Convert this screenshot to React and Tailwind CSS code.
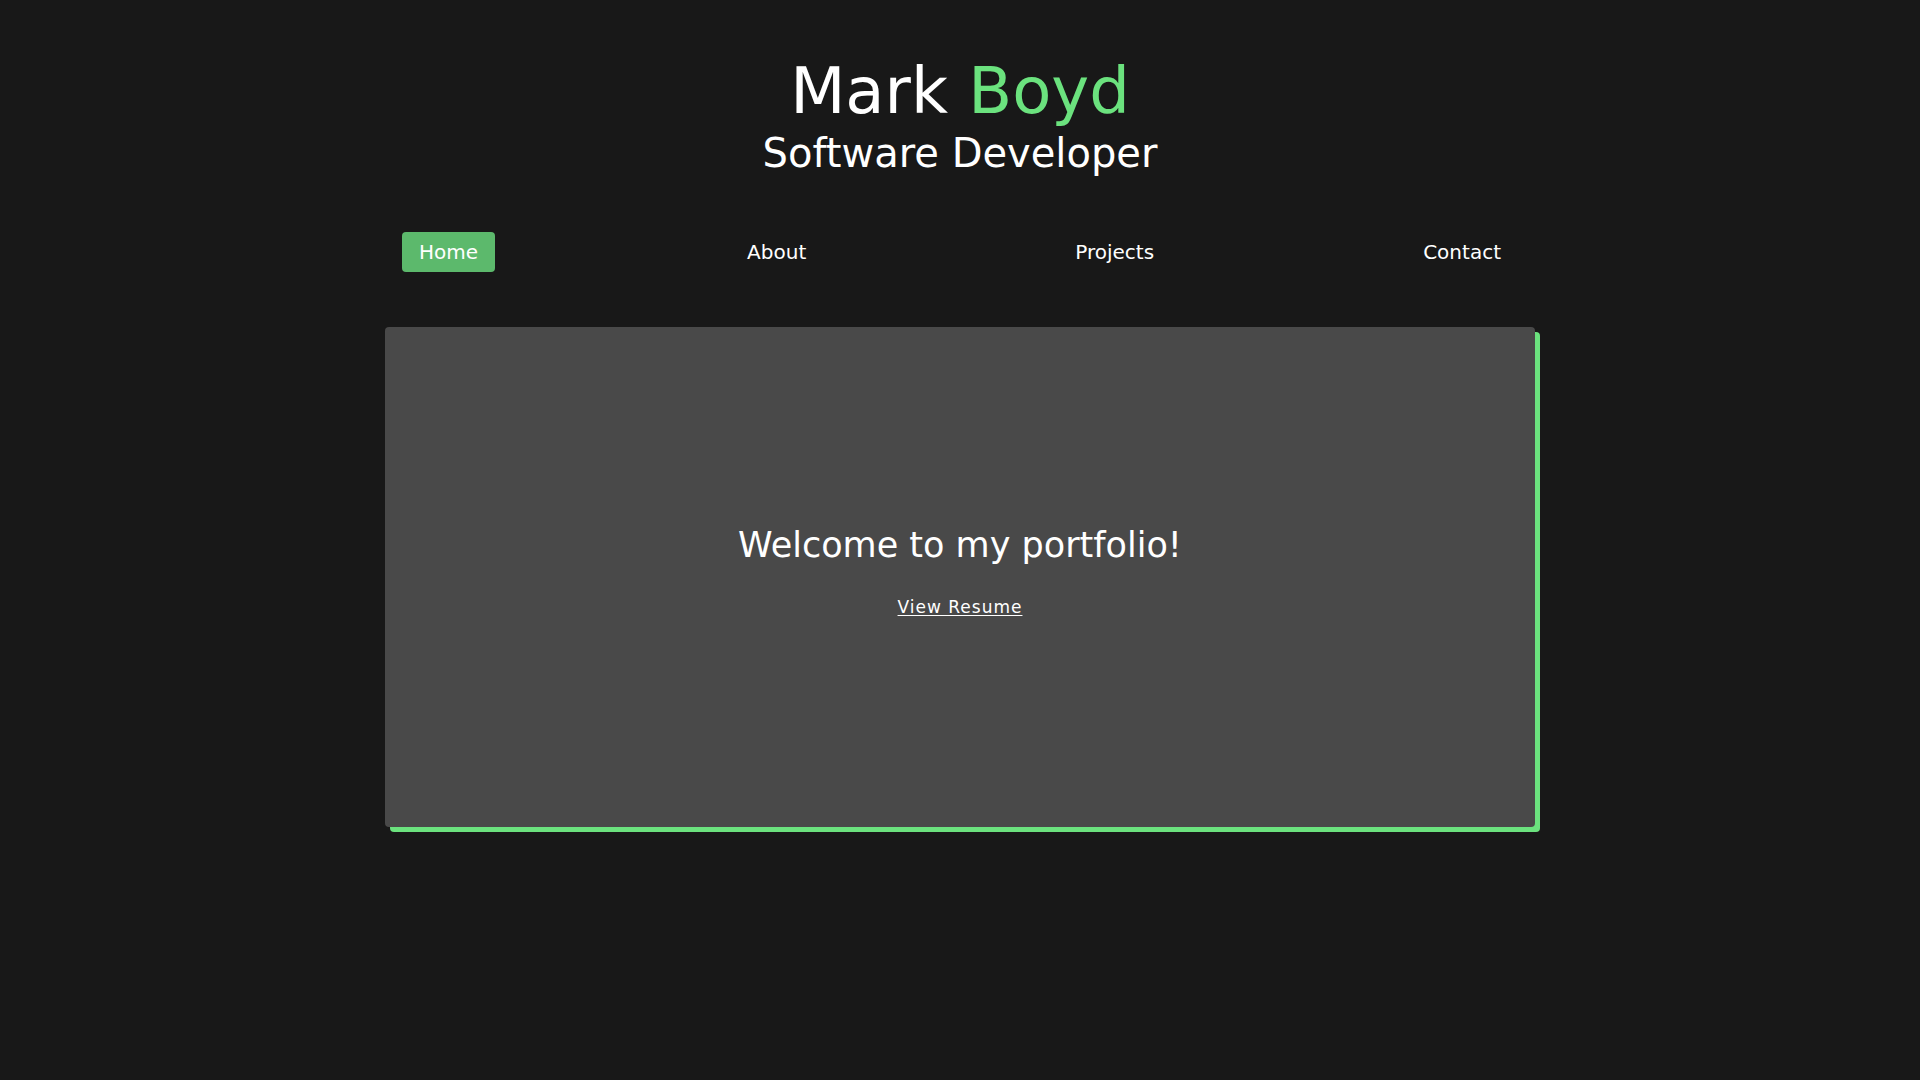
import React from 'react';

const links = ['Home', 'About', 'Projects', 'Contact'];

export default function App() {
  return (
    <div
      className="min-h-screen bg-[#181818] text-white"
      style={{ fontFamily: '"DejaVu Sans", "Liberation Sans", sans-serif' }}
    >
      {/* header */}
      <header className="flex flex-col items-center pt-[59px]">
        <h1 className="text-[64px] leading-none font-normal">
          Mark <span className="text-[#6be27e]">Boyd</span>
        </h1>
        <h2 className="mt-[10px] text-[40px] leading-none font-normal">Software Developer</h2>
      </header>

      {/* nav */}
      <nav className="w-[1116px] mx-auto mt-[59px] flex justify-between">
        {links.map((l) => (
          <a
            key={l}
            href="#"
            className={
              l === 'Home'
                ? 'px-[17px] py-2 text-[20px] leading-[24px] rounded-[4px] bg-[#5cb96c] text-white'
                : 'px-[17px] py-2 text-[20px] leading-[24px] rounded-[4px] text-white'
            }
          >
            {l}
          </a>
        ))}
      </nav>

      {/* card */}
      <main className="mt-[55px] flex justify-center">
        <section className="w-[1150px] h-[500px] bg-[#494949] rounded-[4px] shadow-[5px_5px_0_#6be27e] flex flex-col items-center pt-[201px]">
          <h3 className="text-[35px] leading-none font-normal">Welcome to my portfolio!</h3>
          <a href="#" className="mt-[36px] text-[17px] leading-none tracking-[1px] underline underline-offset-2">
            View Resume
          </a>
        </section>
      </main>
    </div>
  );
}
